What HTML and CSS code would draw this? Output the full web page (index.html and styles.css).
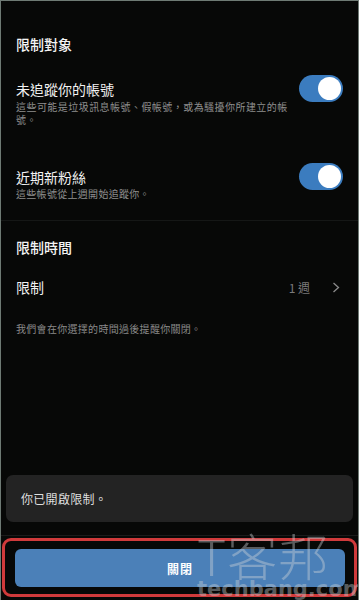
FILE: index.html
```html
<!DOCTYPE html>
<html lang="zh-Hant">
<head>
<meta charset="utf-8">
<title>限制</title>
<link rel="stylesheet" href="styles.css">
</head>
<body>
<div class="screen">
  <section class="section section-first">
    <h2 class="section-title">限制對象</h2>
    <div class="toggle-row row-first">
      <div class="row-text">
        <div class="row-title">未追蹤你的帳號</div>
        <div class="row-sub row-sub-wide">這些可能是垃圾訊息帳號、假帳號，或為騷擾你所建立的帳號。</div>
      </div>
      <span class="toggle"><span class="knob"></span></span>
    </div>
    <div class="toggle-row row-second">
      <div class="row-text">
        <div class="row-title">近期新粉絲</div>
        <div class="row-sub">這些帳號從上週開始追蹤你。</div>
      </div>
      <span class="toggle"><span class="knob"></span></span>
    </div>
  </section>
  <section class="section section-second">
    <h2 class="section-title">限制時間</h2>
    <div class="nav-row">
      <span class="row-title">限制</span>
      <span class="nav-value">1 週</span>
      <svg class="chevron" width="8" height="11" viewBox="0 0 8 11"><polyline points="1.5,1 6.5,5.5 1.5,10" fill="none" stroke="#8a8a8a" stroke-width="1.3"/></svg>
    </div>
    <p class="note">我們會在你選擇的時間過後提醒你關閉。</p>
  </section>
  <div class="spacer"></div>
  <div class="toast">你已開啟限制。</div>
  <div class="footer">
    <div class="highlight">
      <button class="close-btn">關閉</button>
    </div>
  </div>
  <div class="watermark">
    <span class="wm-big">T客邦</span>
    <span class="wm-small">techbang.com</span>
  </div>
</div>
</body>
</html>
```
FILE: styles.css
```css
* { box-sizing: border-box; }
html, body { margin: 0; padding: 0; background: #070807; }
body {
  font-family: "Noto Sans CJK TC", "Noto Sans", sans-serif;
  color: #f2f2f2;
}
.screen {
  position: relative;
  width: 359px;
  height: 600px;
  border: 1px solid #6e7a74;
  border-bottom: none;
  background: #070807;
  display: flex;
  flex-direction: column;
  overflow: hidden;
}
.section { padding: 0 15px 0 15px; }
.section-first {
  padding-top: 33px;
  padding-bottom: 20px;
  border-bottom: 1px solid #151716;
}
.section-second { padding-top: 16px; }
.section-title {
  margin: 0;
  font-size: 14px;
  line-height: 20px;
  font-weight: 500;
  color: #f4f4f4;
}
.toggle-row {
  display: flex;
  align-items: flex-start;
  gap: 4px;
}
.row-first { margin-top: 21px; }
.row-second { margin-top: 37px; }
.row-text { flex: 1; padding-top: 4px; min-width: 0; }
.row-title {
  font-size: 14px;
  line-height: 20px;
  color: #f2f2f2;
}
.row-sub {
  margin-top: 1px;
  font-size: 10px;
  line-height: 13px;
  letter-spacing: 0.3px;
  color: #8e8e8e;
}
.row-sub-wide {
  letter-spacing: 0.45px;
}
.row-second .row-sub { margin-top: 0; }
.toggle {
  flex: none;
  width: 44px;
  height: 27px;
  border-radius: 14px;
  background: #3b7cbf;
  display: flex;
  align-items: center;
  justify-content: flex-end;
  padding-right: 2px;
}
.knob {
  width: 23px;
  height: 23px;
  border-radius: 50%;
  background: #ffffff;
}
.nav-row {
  margin-top: 20px;
  display: flex;
  align-items: center;
  height: 20px;
  padding-right: 3px;
}
.nav-row .row-title { flex: 1; }
.nav-value {
  font-size: 12px;
  color: #7a7a7a;
  margin-right: 22px;
}
.chevron { display: block; }
.note {
  margin: 25px 0 0;
  font-size: 10px;
  line-height: 13px;
  letter-spacing: 0.3px;
  color: #8a8a8a;
}
.spacer { flex: 1; }
.toast {
  margin: 0 5px;
  height: 47px;
  border-radius: 7px;
  background: #232323;
  display: flex;
  align-items: center;
  padding-left: 15px;
  font-size: 12px;
  letter-spacing: 0.3px;
  color: #dedede;
}
.footer {
  margin-top: 13px;
  border-top: 1px solid #1b1b1b;
  padding: 2px 0 3px;
}
.highlight {
  margin: 0 1px;
  height: 59px;
  border: 3px solid #d03a3b;
  border-radius: 9px;
  padding: 8px 9px 7px 10px;
}
.close-btn {
  display: block;
  width: 100%;
  height: 38px;
  border: none;
  border-radius: 6px;
  background: #4b80b8;
  color: #ffffff;
  font-family: inherit;
  font-size: 12px;
  font-weight: 700;
  letter-spacing: 1px;
}
.watermark {
  position: absolute;
  left: 196px;
  top: 528px;
  width: 163px;
  pointer-events: none;
  color: rgba(205, 210, 215, 0.42);
  display: flex;
  flex-direction: column;
  align-items: flex-start;
}
.wm-big {
  font-size: 50px;
  line-height: 50px;
  font-weight: 300;
  letter-spacing: 1px;
}
.wm-small {
  font-family: "DejaVu Sans", sans-serif;
  font-size: 21px;
  line-height: 20px;
  font-weight: 700;
}
```
